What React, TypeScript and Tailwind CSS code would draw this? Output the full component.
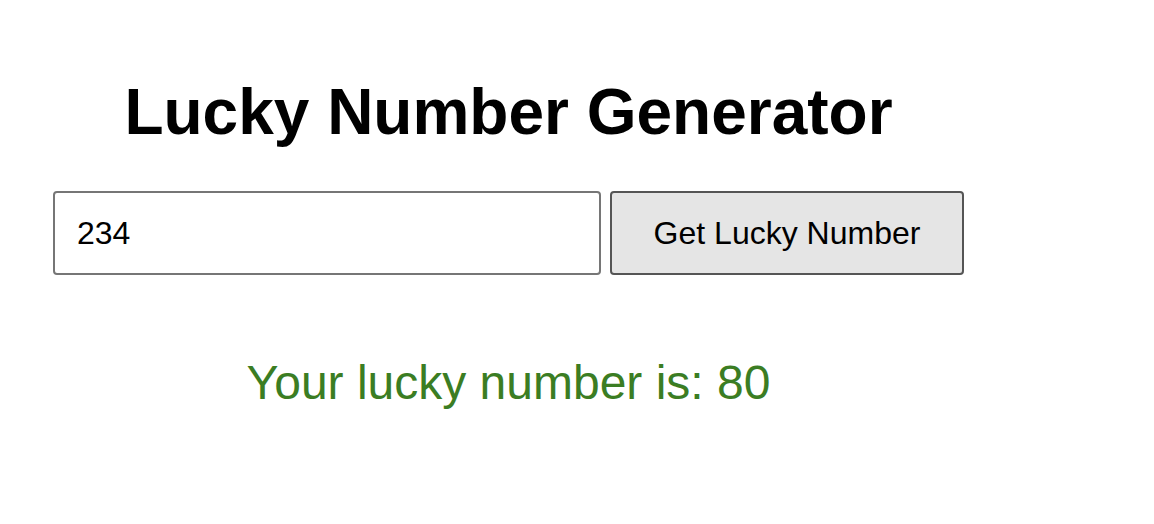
import { useState } from "react";

export default function App() {
	const [value, setValue] = useState("234");
	const [lucky, setLucky] = useState<number | null>(80);

	function handleClick() {
		const n = parseInt(value, 10);
		if (isNaN(n)) return;
		setLucky(((n * 7) % 100) + 1);
	}

	return (
		<div className="min-h-screen bg-white font-['Liberation_Sans',Arial,sans-serif] text-black">
			<div className="ml-[53px] w-[911px] pt-[76px]">
				<h1 className="text-center text-[64px] font-bold leading-[72px]">
					Lucky Number Generator
				</h1>

				<div className="mt-[43px] flex gap-[9px]">
					<input
						type="text"
						value={value}
						onChange={(e) => setValue(e.target.value)}
						className="h-[84px] w-[548px] rounded-[4px] border-2 border-[#767676] bg-white px-[22px] text-[32px] outline-none"
					/>
					<button
						onClick={handleClick}
						className="h-[84px] w-[354px] rounded-[4px] border-2 border-[#555555] bg-[#e5e5e5] text-[32px]"
					>
						Get Lucky Number
					</button>
				</div>

				{lucky !== null && (
					<p className="mt-[80px] text-center text-[48px] leading-[56px] text-[#3b7d23]">
						Your lucky number is: {lucky}
					</p>
				)}
			</div>
		</div>
	);
}
